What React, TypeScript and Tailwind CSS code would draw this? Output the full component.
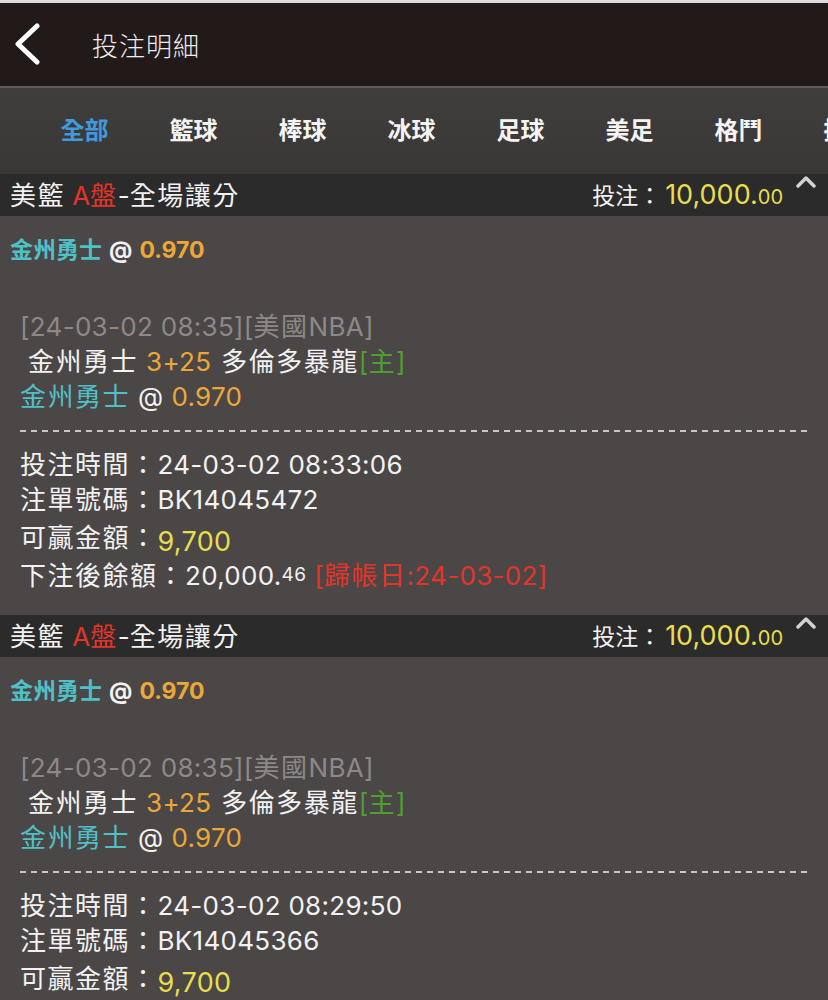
import type { ReactNode } from "react";

type Bet = {
  placedAt: string;
  ticket: string;
};

const bets: Bet[] = [
  { placedAt: "24-03-02 08:33:06", ticket: "BK14045472" },
  { placedAt: "24-03-02 08:29:50", ticket: "BK14045366" },
];

const tabs = ["全部", "籃球", "棒球", "冰球", "足球", "美足", "格鬥", "排球"];

const font = "font-['Inter','Noto_Sans_CJK_TC',sans-serif]";

function BackIcon() {
  return (
    <svg width="30" height="44" viewBox="0 0 30 44" className="shrink-0">
      <polyline
        points="24,3 5,21 24,39"
        fill="none"
        stroke="#ffffff"
        strokeWidth="5"
        strokeLinecap="round"
        strokeLinejoin="round"
      />
    </svg>
  );
}

function Caret() {
  return (
    <svg width="20" height="14" viewBox="0 0 20 14">
      <polyline
        points="2,11 10,3 18,11"
        fill="none"
        stroke="#d2d2d2"
        strokeWidth="3.5"
        strokeLinecap="round"
        strokeLinejoin="round"
      />
    </svg>
  );
}

function Row({ children, h = "h-[35px]" }: { children: ReactNode; h?: string }) {
  return <div className={`flex items-center whitespace-nowrap ${h}`}>{children}</div>;
}

// CJK runs get wider tracking than latin runs
function Zh({ children, className = "" }: { children: ReactNode; className?: string }) {
  return <span className={`tracking-[1.5px] ${className}`}>{children}</span>;
}

function BetCard({ bet }: { bet: Bet }) {
  return (
    <section>
      <div className="relative flex h-[42px] items-center justify-between bg-[#2b2b2b] pl-[10px] pr-[45px]">
        <p className="text-[26px] text-[#f2f2f2]">
          <Zh>美籃</Zh> <span className="text-[#e3342a]">A<Zh>盤</Zh></span>-<Zh>全場讓分</Zh>
        </p>
        <p className="flex items-baseline text-[#f2f2f2]">
          <span className="text-[23px]">投注：</span>
          <span className="ml-[4px] text-[27px] text-[#e8de4c]">10,000.</span>
          <span className="text-[20px] text-[#e8de4c]">00</span>
        </p>
        <div className="absolute right-[12px] top-[1px]">
          <Caret />
        </div>
      </div>

      <div className="bg-[#4b4746] pb-[22px] pt-[17px]">
        <p className="flex h-[34px] items-center pl-[10px] text-[23px] font-bold">
          <span className="text-[#4fc0c6]">金州勇士</span>
          <span className="mx-[7px] text-[#f2f2f2]">@</span>
          <span className="text-[#eba838]">0.970</span>
        </p>

        <div className="mt-[42px] px-[20px] text-[26px] tracking-[0.3px] text-[#f2f2f2]">
          <Row>
            <span className="text-[#8d8988]">
              [24-03-02 08:35][<Zh>美國</Zh>NBA]
            </span>
          </Row>
          <Row>
            <Zh className="pl-[8px]">金州勇士</Zh>
            <span className="ml-[8px] text-[#eba838]">3+25</span>
            <Zh className="ml-[10px]">多倫多暴龍</Zh>
            <span className="text-[#4f9f2f]">
              [<Zh>主</Zh>]
            </span>
          </Row>
          <Row>
            <Zh className="text-[#4fc0c6]">金州勇士</Zh>
            <span className="mx-[8px]">@</span>
            <span className="text-[#eba838]">0.970</span>
          </Row>

          <div className="mb-[15px] mt-[16px] h-[2px] w-[790px] bg-[repeating-linear-gradient(90deg,#c6c6c6_0_6px,transparent_6px_11px)]" />

          <Row>
            <Zh>投注時間：</Zh>
            <span>{bet.placedAt}</span>
          </Row>
          <Row>
            <Zh>注單號碼：</Zh>
            <span>{bet.ticket}</span>
          </Row>
          <Row h="h-[41px]">
            <Zh>可贏金額：</Zh>
            <span className="mt-[10px] text-[27px] text-[#e8de4c]">9,700</span>
          </Row>
          <Row>
            <Zh>下注後餘額：</Zh>
            <span>20,000.</span>
            <span className="text-[19px]">46</span>
            <span className="ml-[8px] text-[#e3342a]">
              [<Zh>歸帳日</Zh>:24-03-02]
            </span>
          </Row>
        </div>
      </div>
    </section>
  );
}

export default function App() {
  return (
    <div className={`h-[1000px] w-[828px] overflow-hidden bg-[#4b4746] ${font}`}>
      <div className="h-[3px] bg-[#dcdcdc]" />

      <header className="flex h-[83px] items-center bg-[#221a18] pl-[13px]">
        <BackIcon />
        <h1 className="ml-[49px] mt-[3px] text-[26px] font-light tracking-[1px] text-[#eeeeee]">
          投注明細
        </h1>
      </header>

      <div className="h-[2px] bg-[#625d5b]" />

      <nav className="flex h-[86px] items-center overflow-hidden bg-[linear-gradient(180deg,#403e3d,#3a3837)] pl-[30px]">
        {tabs.map((tab, i) => (
          <span
            key={tab}
            className={`w-[109px] shrink-0 text-center text-[24px] font-bold ${
              i === 0 ? "text-[#3f9ade]" : "text-[#f4f4f4]"
            }`}
          >
            {tab}
          </span>
        ))}
      </nav>

      {bets.map((bet) => (
        <BetCard key={bet.ticket} bet={bet} />
      ))}
    </div>
  );
}
